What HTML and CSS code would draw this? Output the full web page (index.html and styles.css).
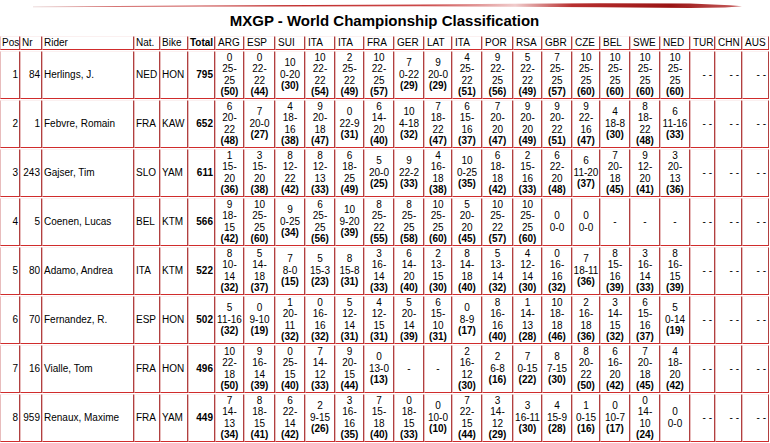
FILE: index.html
```html
<!DOCTYPE html>
<html>
<head>
<meta charset="utf-8">
<title>MXGP - World Championship Classification</title>
<link rel="stylesheet" href="styles.css">
</head>
<body>
<div class="page">
<svg class="brush" width="770" height="12" viewBox="0 0 770 12">
<defs>
<linearGradient id="g" x1="0" y1="0" x2="1" y2="0">
<stop offset="0" stop-color="#e6d0d0"/>
<stop offset="0.12" stop-color="#d06060"/>
<stop offset="0.35" stop-color="#c02a2a"/>
<stop offset="0.55" stop-color="#cc4a4a"/>
<stop offset="0.68" stop-color="#f0cccc"/>
<stop offset="0.76" stop-color="#b83030"/>
<stop offset="0.9" stop-color="#9a1414"/>
<stop offset="1" stop-color="#c86060"/>
</linearGradient>
</defs>
<path d="M33 6.4 L200 5.4 L420 4.4 L600 3.2 L690 3.4 L730 5.2 L742 6.2 L725 7.4 L690 8 L600 7.2 L420 6.2 L200 6.6 L33 7.2 Z" fill="url(#g)"/>
</svg>
<h1 class="title">MXGP - World Championship Classification</h1>
<table class="classif">
<thead>
<tr>
<th class="c-pos">Pos</th><th class="c-nr">Nr</th><th class="c-rider">Rider</th><th class="c-nat">Nat.</th><th class="c-bike">Bike</th><th class="c-tot">Total</th>
<th class="rh w29">ARG</th><th class="rh w31">ESP</th><th class="rh w30">SUI</th><th class="rh w30">ITA</th><th class="rh w29">ITA</th><th class="rh w30">FRA</th><th class="rh w30">GER</th><th class="rh w28">LAT</th><th class="rh w30">ITA</th><th class="rh w31">POR</th><th class="rh w29">RSA</th><th class="rh w30">GBR</th><th class="rh w28">CZE</th><th class="rh w30">BEL</th><th class="rh w30">SWE</th><th class="rh w30">NED</th><th class="rh w25">TUR</th><th class="rh w27">CHN</th><th class="rh w27">AUS</th>
</tr>
</thead>
<tbody>
<tr>
<td class="num">1</td><td class="num">84</td><td>Herlings, J.</td><td>NED</td><td>HON</td><td class="tot">795</td>
<td class="r">0<br>25-<br>25<br><b>(50)</b></td>
<td class="r">0<br>22-<br>22<br><b>(44)</b></td>
<td class="r">10<br>0-20<br><b>(30)</b></td>
<td class="r">10<br>22-<br>22<br><b>(54)</b></td>
<td class="r">2<br>25-<br>22<br><b>(49)</b></td>
<td class="r">10<br>22-<br>25<br><b>(57)</b></td>
<td class="r">7<br>0-22<br><b>(29)</b></td>
<td class="r">9<br>20-0<br><b>(29)</b></td>
<td class="r">4<br>25-<br>22<br><b>(51)</b></td>
<td class="r">9<br>22-<br>25<br><b>(56)</b></td>
<td class="r">5<br>22-<br>22<br><b>(49)</b></td>
<td class="r">7<br>25-<br>25<br><b>(57)</b></td>
<td class="r">10<br>25-<br>25<br><b>(60)</b></td>
<td class="r">10<br>25-<br>25<br><b>(60)</b></td>
<td class="r">10<br>25-<br>25<br><b>(60)</b></td>
<td class="r">10<br>25-<br>25<br><b>(60)</b></td>
<td class="na">- -</td><td class="na">- -</td><td class="na">- -</td>
</tr>
<tr>
<td class="num">2</td><td class="num">1</td><td>Febvre, Romain</td><td>FRA</td><td>KAW</td><td class="tot">652</td>
<td class="r">6<br>20-<br>22<br><b>(48)</b></td>
<td class="r">7<br>20-0<br><b>(27)</b></td>
<td class="r">4<br>18-<br>16<br><b>(38)</b></td>
<td class="r">9<br>20-<br>18<br><b>(47)</b></td>
<td class="r">0<br>22-9<br><b>(31)</b></td>
<td class="r">6<br>14-<br>20<br><b>(40)</b></td>
<td class="r">10<br>4-18<br><b>(32)</b></td>
<td class="r">7<br>18-<br>22<br><b>(47)</b></td>
<td class="r">6<br>15-<br>16<br><b>(37)</b></td>
<td class="r">7<br>20-<br>20<br><b>(47)</b></td>
<td class="r">9<br>20-<br>20<br><b>(49)</b></td>
<td class="r">9<br>20-<br>22<br><b>(51)</b></td>
<td class="r">9<br>22-<br>16<br><b>(47)</b></td>
<td class="r">4<br>18-8<br><b>(30)</b></td>
<td class="r">8<br>18-<br>22<br><b>(48)</b></td>
<td class="r">6<br>11-16<br><b>(33)</b></td>
<td class="na">- -</td><td class="na">- -</td><td class="na">- -</td>
</tr>
<tr>
<td class="num">3</td><td class="num">243</td><td>Gajser, Tim</td><td>SLO</td><td>YAM</td><td class="tot">611</td>
<td class="r">1<br>15-<br>20<br><b>(36)</b></td>
<td class="r">3<br>15-<br>20<br><b>(38)</b></td>
<td class="r">8<br>12-<br>22<br><b>(42)</b></td>
<td class="r">8<br>12-<br>13<br><b>(33)</b></td>
<td class="r">6<br>18-<br>25<br><b>(49)</b></td>
<td class="r">5<br>20-0<br><b>(25)</b></td>
<td class="r">9<br>22-2<br><b>(33)</b></td>
<td class="r">4<br>16-<br>18<br><b>(38)</b></td>
<td class="r">10<br>0-25<br><b>(35)</b></td>
<td class="r">6<br>18-<br>18<br><b>(42)</b></td>
<td class="r">2<br>15-<br>16<br><b>(33)</b></td>
<td class="r">6<br>22-<br>20<br><b>(48)</b></td>
<td class="r">6<br>11-20<br><b>(37)</b></td>
<td class="r">7<br>20-<br>18<br><b>(45)</b></td>
<td class="r">9<br>12-<br>20<br><b>(41)</b></td>
<td class="r">3<br>20-<br>13<br><b>(36)</b></td>
<td class="na">- -</td><td class="na">- -</td><td class="na">- -</td>
</tr>
<tr>
<td class="num">4</td><td class="num">5</td><td>Coenen, Lucas</td><td>BEL</td><td>KTM</td><td class="tot">566</td>
<td class="r">9<br>18-<br>15<br><b>(42)</b></td>
<td class="r">10<br>25-<br>25<br><b>(60)</b></td>
<td class="r">9<br>0-25<br><b>(34)</b></td>
<td class="r">6<br>25-<br>25<br><b>(56)</b></td>
<td class="r">10<br>9-20<br><b>(39)</b></td>
<td class="r">8<br>25-<br>22<br><b>(55)</b></td>
<td class="r">8<br>25-<br>25<br><b>(58)</b></td>
<td class="r">10<br>25-<br>25<br><b>(60)</b></td>
<td class="r">5<br>20-<br>20<br><b>(45)</b></td>
<td class="r">10<br>25-<br>22<br><b>(57)</b></td>
<td class="r">10<br>25-<br>25<br><b>(60)</b></td>
<td class="r">0<br>0-0</td>
<td class="r">0<br>0-0</td>
<td class="r">-</td>
<td class="r">-</td>
<td class="r">-</td>
<td class="na">- -</td><td class="na">- -</td><td class="na">- -</td>
</tr>
<tr>
<td class="num">5</td><td class="num">80</td><td>Adamo, Andrea</td><td>ITA</td><td>KTM</td><td class="tot">522</td>
<td class="r">8<br>10-<br>14<br><b>(32)</b></td>
<td class="r">5<br>14-<br>18<br><b>(37)</b></td>
<td class="r">7<br>8-0<br><b>(15)</b></td>
<td class="r">5<br>15-3<br><b>(23)</b></td>
<td class="r">8<br>15-8<br><b>(31)</b></td>
<td class="r">3<br>16-<br>14<br><b>(33)</b></td>
<td class="r">6<br>14-<br>20<br><b>(40)</b></td>
<td class="r">2<br>13-<br>15<br><b>(30)</b></td>
<td class="r">8<br>14-<br>18<br><b>(40)</b></td>
<td class="r">5<br>13-<br>14<br><b>(32)</b></td>
<td class="r">4<br>12-<br>14<br><b>(30)</b></td>
<td class="r">0<br>16-<br>16<br><b>(32)</b></td>
<td class="r">7<br>18-11<br><b>(36)</b></td>
<td class="r">8<br>15-<br>16<br><b>(39)</b></td>
<td class="r">3<br>16-<br>14<br><b>(33)</b></td>
<td class="r">8<br>16-<br>15<br><b>(39)</b></td>
<td class="na">- -</td><td class="na">- -</td><td class="na">- -</td>
</tr>
<tr>
<td class="num">6</td><td class="num">70</td><td>Fernandez, R.</td><td>ESP</td><td>HON</td><td class="tot">502</td>
<td class="r">5<br>11-16<br><b>(32)</b></td>
<td class="r">0<br>9-10<br><b>(19)</b></td>
<td class="r">1<br>20-<br>11<br><b>(32)</b></td>
<td class="r">0<br>16-<br>16<br><b>(32)</b></td>
<td class="r">5<br>12-<br>14<br><b>(31)</b></td>
<td class="r">4<br>12-<br>15<br><b>(31)</b></td>
<td class="r">5<br>20-<br>14<br><b>(39)</b></td>
<td class="r">6<br>15-<br>10<br><b>(31)</b></td>
<td class="r">0<br>8-9<br><b>(17)</b></td>
<td class="r">8<br>16-<br>16<br><b>(40)</b></td>
<td class="r">1<br>14-<br>13<br><b>(28)</b></td>
<td class="r">10<br>18-<br>18<br><b>(46)</b></td>
<td class="r">2<br>16-<br>18<br><b>(36)</b></td>
<td class="r">3<br>14-<br>15<br><b>(32)</b></td>
<td class="r">6<br>15-<br>16<br><b>(37)</b></td>
<td class="r">5<br>0-14<br><b>(19)</b></td>
<td class="na">- -</td><td class="na">- -</td><td class="na">- -</td>
</tr>
<tr>
<td class="num">7</td><td class="num">16</td><td>Vialle, Tom</td><td>FRA</td><td>HON</td><td class="tot">496</td>
<td class="r">10<br>22-<br>18<br><b>(50)</b></td>
<td class="r">9<br>16-<br>14<br><b>(39)</b></td>
<td class="r">0<br>25-<br>15<br><b>(40)</b></td>
<td class="r">7<br>14-<br>12<br><b>(33)</b></td>
<td class="r">9<br>20-<br>15<br><b>(44)</b></td>
<td class="r">0<br>13-0<br><b>(13)</b></td>
<td class="r">-</td>
<td class="r">-</td>
<td class="r">2<br>16-<br>12<br><b>(30)</b></td>
<td class="r">2<br>6-8<br><b>(16)</b></td>
<td class="r">7<br>0-15<br><b>(22)</b></td>
<td class="r">8<br>7-15<br><b>(30)</b></td>
<td class="r">8<br>20-<br>22<br><b>(50)</b></td>
<td class="r">6<br>16-<br>20<br><b>(42)</b></td>
<td class="r">7<br>20-<br>18<br><b>(45)</b></td>
<td class="r">4<br>18-<br>20<br><b>(42)</b></td>
<td class="na">- -</td><td class="na">- -</td><td class="na">- -</td>
</tr>
<tr>
<td class="num">8</td><td class="num">959</td><td>Renaux, Maxime</td><td>FRA</td><td>YAM</td><td class="tot">449</td>
<td class="r">7<br>14-<br>13<br><b>(34)</b></td>
<td class="r">8<br>18-<br>15<br><b>(41)</b></td>
<td class="r">6<br>22-<br>14<br><b>(42)</b></td>
<td class="r">2<br>9-15<br><b>(26)</b></td>
<td class="r">3<br>16-<br>16<br><b>(35)</b></td>
<td class="r">7<br>15-<br>18<br><b>(40)</b></td>
<td class="r">0<br>18-<br>15<br><b>(33)</b></td>
<td class="r">0<br>10-0<br><b>(10)</b></td>
<td class="r">7<br>22-<br>15<br><b>(44)</b></td>
<td class="r">3<br>14-<br>12<br><b>(29)</b></td>
<td class="r">3<br>16-11<br><b>(30)</b></td>
<td class="r">4<br>15-9<br><b>(28)</b></td>
<td class="r">1<br>0-15<br><b>(16)</b></td>
<td class="r">0<br>10-7<br><b>(17)</b></td>
<td class="r">0<br>14-<br>10<br><b>(24)</b></td>
<td class="r">0<br>0-0</td>
<td class="na">- -</td><td class="na">- -</td><td class="na">- -</td>
</tr>
</tbody>
</table>
</div>
</body>
</html>
```
FILE: styles.css
```css
* {
  box-sizing: border-box;
}

body {
  margin: 0;
  background: #ffffff;
  color: #000000;
  font-family: "Liberation Sans", Arial, sans-serif;
  font-size: 10px;
  line-height: 11.5px;
}

.page {
  width: 770px;
}

.brush {
  display: block;
}

.title {
  margin: 0;
  width: 769px;
  font-size: 15px;
  line-height: 18px;
  font-weight: bold;
  text-align: center;
  color: #000000;
}

.classif {
  margin-top: 5px;
  width: 769px;
  table-layout: fixed;
  border-collapse: separate;
  border-spacing: 0 1px;
}

.classif th,
.classif td {
  border-top: 1px solid #fbf0f0;
  border-left: 1px solid #e8bcbc;
  border-right: 1px solid #b04040;
  border-bottom: 1px solid #d02c2c;
  padding: 0 1px;
  white-space: nowrap;
  vertical-align: middle;
  text-align: left;
  font-weight: normal;
}

.classif th.rh {
  padding-left: 2px;
}

.classif th.c-pos {
  width: 20px;
  text-align: right;
}

.c-nr { width: 22px; }
.c-rider { width: 92px; }
.c-nat { width: 26px; }
.c-bike { width: 28px; }

.classif th.c-tot {
  width: 27px;
  font-weight: bold;
}

.w25 { width: 25px; }
.w27 { width: 27px; }
.w28 { width: 28px; }
.w29 { width: 29px; }
.w30 { width: 30px; }
.w31 { width: 31px; }

.classif td.num {
  text-align: right;
}

.classif td.tot {
  text-align: right;
  font-weight: bold;
}

.classif td.r {
  padding: 0;
  text-align: center;
}

.classif td.na {
  text-align: right;
  padding-right: 2px;
}

.classif b {
  font-weight: bold;
}
```
